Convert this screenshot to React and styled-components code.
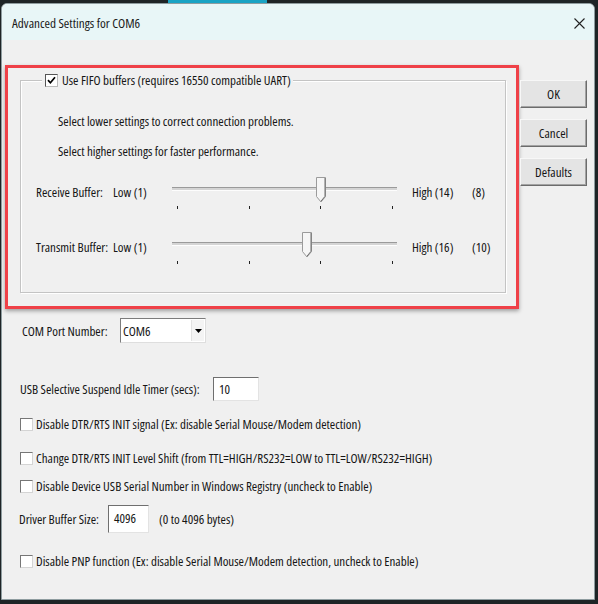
import React from 'react';
import styled, { createGlobalStyle } from 'styled-components';

const GlobalStyle = createGlobalStyle`
  html, body { margin: 0; padding: 0; }
  body { width: 598px; height: 604px; overflow: hidden; background: #232323; }
  #root { width: 598px; height: 604px; }
  * { box-sizing: border-box; }
`;

const UI_FONT = `"Open Sans", "Liberation Sans", Arial, sans-serif`;

const Screen = styled.div`
  width: 598px;
  height: 604px;
  display: flex;
  flex-direction: column;
  background: #1e2426;
`;

const TopStrip = styled.div`
  height: 3px;
  flex: none;
  display: flex;
`;

const StripAccent = styled.div`
  margin-left: 168px;
  width: 99px;
  background: #19a3c4;
`;

const Window = styled.div`
  flex: 1;
  margin: 0 3px 4px 1px;
  display: flex;
  flex-direction: column;
  background: #f0f0f0;
  border: 1px solid #8e9c9f;
  border-radius: 6px 6px 0 0;
  overflow: hidden;
  font-family: ${UI_FONT};
  font-stretch: 78%;
  font-size: 13px;
  color: #151515;
`;

const TitleBar = styled.div`
  height: 36px;
  flex: none;
  display: flex;
  align-items: center;
  justify-content: space-between;
  padding: 0 9px 0 10px;
  background: #e8f6f7;
`;

const Title = styled.div`
  font-size: 13.2px;
  font-stretch: 79%;
  color: #1a1a1a;
  margin-top: 1px;
`;

const CloseIcon = styled.svg`
  width: 11px;
  height: 11px;
  margin-top: 2px;
`;

const Body = styled.div`
  flex: 1;
  display: flex;
  flex-direction: column;
  padding: 25px 0 0 3px;
`;

const TopRow = styled.div`
  display: flex;
  align-items: flex-start;
`;

const Highlight = styled.div`
  width: 514px;
  height: 244px;
  flex: none;
  border: 3px solid #ef4148;
  padding: 12px 10px 13px 12px;
  display: flex;
  box-shadow: 0 2px 4px rgba(0, 0, 0, 0.35);
`;

const GroupBox = styled.div`
  flex: 1;
  display: flex;
  flex-direction: column;
  border: 1px solid #c4c4c4;
  box-shadow: inset 1px 1px 0 #fff, 1px 1px 0 #fff;
`;

const Legend = styled.div`
  align-self: flex-start;
  display: flex;
  align-items: center;
  gap: 4px;
  height: 15px;
  margin: -8px 0 0 21px;
  padding: 0 2px 0 3px;
  background: #f0f0f0;
  line-height: 15px;
`;

const Hint = styled.div`
  margin: ${(p) => p.$mt}px 0 0 37px;
  line-height: 16px;
`;

const SliderRow = styled.div`
  display: grid;
  grid-template-columns: 77px 59px 225px 75px auto;
  height: 35px;
  margin-top: ${(p) => p.$mt}px;
  padding-left: 15px;
`;

const RowText = styled.div`
  margin-top: 7px;
  line-height: 16px;
  padding-left: ${(p) => p.$pl || 0}px;
  white-space: nowrap;
`;

const Slider = styled.div`
  position: relative;
  height: 35px;
  display: flex;
  flex-direction: column;
`;

const Track = styled.div`
  margin-top: 10px;
  height: 4px;
  background: #d4d4d4;
  border-top: 1px solid #9a9a9a;
  border-bottom: 1px solid #fdfdfd;
`;

const Ticks = styled.div`
  margin-top: 15px;
  display: flex;
  justify-content: space-between;
  padding: 0 4px 0 5px;
`;

const Tick = styled.span`
  width: 1px;
  height: 3px;
  background: #222;
`;

const Thumb = styled.svg`
  position: absolute;
  top: 0;
  left: ${(p) => p.$pos}px;
  width: 10px;
  height: 26px;
`;

const ButtonColumn = styled.div`
  display: flex;
  flex-direction: column;
  gap: 11px;
  margin: 15px 0 0 1px;
`;

const Button = styled.button`
  width: 67px;
  height: 28px;
  padding: 0;
  font-family: ${UI_FONT};
  font-stretch: 78%;
  font-size: 13px;
  color: #151515;
  background: #e4e4e4;
  border: 1px solid;
  border-color: #f7f7f7 #6c6c6c #6c6c6c #f7f7f7;
  box-shadow: inset -1px -1px 0 #a3a3a3;
`;

const Content = styled.div`
  display: flex;
  flex-direction: column;
  padding-left: 15px;
`;

const Row = styled.div`
  display: flex;
  align-items: center;
  height: ${(p) => p.$h}px;
  margin-top: ${(p) => p.$mt}px;
  margin-left: ${(p) => p.$ml || 0}px;
`;

const Label = styled.span`
  width: ${(p) => p.$w}px;
  flex: none;
  white-space: nowrap;
`;

const Note = styled.span`
  margin-left: 10px;
`;

const Select = styled.div`
  width: 86px;
  height: 25px;
  display: flex;
  align-items: stretch;
  background: #fff;
  border: 1px solid;
  border-color: #7c7c7c #dedede #dedede #7c7c7c;
  padding: 1px;
`;

const SelectValue = styled.span`
  flex: 1;
  padding-left: 1px;
  display: flex;
  align-items: center;
`;

const SelectArrow = styled.span`
  width: 13px;
  display: flex;
  align-items: center;
  justify-content: center;
  background: #f4f4f4;
  border-left: 1px solid #e2e2e2;
`;

const TextBox = styled.div`
  width: ${(p) => p.$w}px;
  height: ${(p) => p.$h}px;
  display: flex;
  align-items: ${(p) => (p.$top ? 'flex-start' : 'center')};
  padding: ${(p) => (p.$top ? '3px' : '0')} 0 0 5px;
  background: #fff;
  border: 1px solid;
  border-color: #6f6f6f #e3e3e3 #e3e3e3 #6f6f6f;
`;

const CheckRow = styled.label`
  display: flex;
  align-items: center;
  gap: 3px;
  height: 16px;
  margin-top: ${(p) => p.$mt}px;
  white-space: nowrap;
`;

const Box = styled.span`
  width: 13px;
  height: 13px;
  flex: none;
  display: flex;
  align-items: center;
  justify-content: center;
  background: #fff;
  border: 1px solid;
  border-color: ${(p) => (p.$checked ? '#555 #bbb #bbb #555' : '#767676 #d4d4d4 #d4d4d4 #767676')};
`;

function CheckBox({ checked }) {
  return (
    <Box $checked={checked}>
      {checked && (
        <svg width="9" height="9" viewBox="0 0 9 9">
          <path d="M1 4.2 L3.4 6.8 L8 1.2" fill="none" stroke="#000" strokeWidth="1.7" />
        </svg>
      )}
    </Box>
  );
}

function TrackBar({ pos }) {
  return (
    <Slider>
      <Track />
      <Ticks>
        <Tick />
        <Tick />
        <Tick />
        <Tick />
      </Ticks>
      <Thumb $pos={pos} viewBox="0 0 10 26">
        <path d="M0.5 0.5 H9.5 V19.5 L5 25 L0.5 19.5 Z" fill="#f6f6f6" stroke="#9b9b9b" />
        <path d="M9 1 V19.3 L5 24.2" fill="none" stroke="#6f6f6f" />
      </Thumb>
    </Slider>
  );
}

const sliders = [
  { label: 'Receive Buffer:', high: 'High (14)', value: '(8)', pos: 144, mt: 18 },
  { label: 'Transmit Buffer:', high: 'High (16)', value: '(10)', pos: 130, mt: 20 },
];

const checks = [
  { text: 'Disable DTR/RTS INIT signal (Ex: disable Serial Mouse/Modem detection)', mt: 15 },
  { text: 'Change DTR/RTS INIT Level Shift (from TTL=HIGH/RS232=LOW to TTL=LOW/RS232=HIGH)', mt: 18 },
  { text: 'Disable Device USB Serial Number in Windows Registry (uncheck to Enable)', mt: 12 },
];

export default function App() {
  return (
    <>
      <GlobalStyle />
      <Screen>
        <TopStrip>
          <StripAccent />
        </TopStrip>
        <Window>
          <TitleBar>
            <Title>Advanced Settings for COM6</Title>
            <CloseIcon viewBox="0 0 11 11">
              <path d="M0.5 0.5 L10.5 10.5 M10.5 0.5 L0.5 10.5" stroke="#222" strokeWidth="1.1" />
            </CloseIcon>
          </TitleBar>
          <Body>
            <TopRow>
              <Highlight>
                <GroupBox>
                  <Legend>
                    <CheckBox checked />
                    <span>Use FIFO buffers (requires 16550 compatible UART)</span>
                  </Legend>
                  <Hint $mt={25}>Select lower settings to correct connection problems.</Hint>
                  <Hint $mt={14}>Select higher settings for faster performance.</Hint>
                  {sliders.map((s) => (
                    <SliderRow key={s.label} $mt={s.mt}>
                      <RowText>{s.label}</RowText>
                      <RowText>Low (1)</RowText>
                      <TrackBar pos={s.pos} />
                      <RowText $pl={15}>{s.high}</RowText>
                      <RowText>{s.value}</RowText>
                    </SliderRow>
                  ))}
                </GroupBox>
              </Highlight>
              <ButtonColumn>
                <Button>OK</Button>
                <Button>Cancel</Button>
                <Button>Defaults</Button>
              </ButtonColumn>
            </TopRow>
            <Content>
              <Row $h={25} $mt={9} $ml={2}>
                <Label $w={98}>COM Port Number:</Label>
                <Select>
                  <SelectValue>COM6</SelectValue>
                  <SelectArrow>
                    <svg width="7" height="4" viewBox="0 0 7 4">
                      <path d="M0 0 H7 L3.5 4 Z" fill="#000" />
                    </svg>
                  </SelectArrow>
                </Select>
              </Row>
              <Row $h={24} $mt={34}>
                <Label $w={193}>USB Selective Suspend Idle Timer (secs):</Label>
                <TextBox $w={46} $h={24}>10</TextBox>
              </Row>
              {checks.map((c) => (
                <CheckRow key={c.text} $mt={c.mt}>
                  <CheckBox />
                  <span>{c.text}</span>
                </CheckRow>
              ))}
              <Row $h={28} $mt={11} $ml={-1}>
                <Label $w={89}>Driver Buffer Size:</Label>
                <TextBox $w={41} $h={28} $top>4096</TextBox>
                <Note>(0 to 4096 bytes)</Note>
              </Row>
              <CheckRow $mt={20}>
                <CheckBox />
                <span>Disable PNP function (Ex: disable Serial Mouse/Modem detection, uncheck to Enable)</span>
              </CheckRow>
            </Content>
          </Body>
        </Window>
      </Screen>
    </>
  );
}
